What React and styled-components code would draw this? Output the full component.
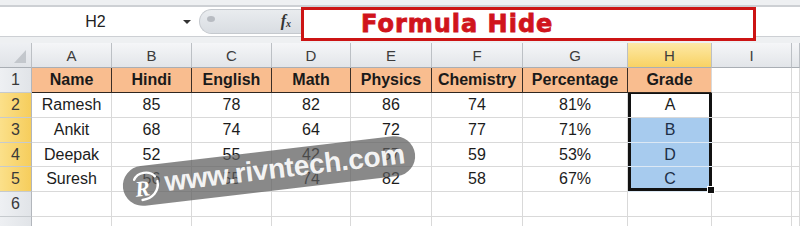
import { Fragment } from "react";
import styled, { createGlobalStyle, css } from "styled-components";

const Global = createGlobalStyle`
  html, body {
    margin: 0;
    padding: 0;
    background: #fff;
  }
  body {
    width: 800px;
    height: 226px;
    overflow: hidden;
    font-family: "Liberation Sans", Arial, sans-serif;
  }
`;

const Page = styled.div`
  width: 800px;
  height: 226px;
  overflow: hidden;
  background: #fff;
`;

const Toolbar = styled.div`
  height: 43px;
  background: #eef0f2;
  padding-top: 5px;
  box-sizing: border-box;
`;

const FormulaRow = styled.div`
  height: 32px;
  box-sizing: border-box;
  border-top: 2px solid #cdd0d4;
  border-bottom: 1px solid #cdd0d4;
  background: #fff;
  display: flex;
  align-items: flex-start;
`;

const NameBox = styled.div`
  width: 197px;
  height: 29px;
  display: flex;
  align-items: center;
  font-size: 16px;
  color: #222;
`;

const NameText = styled.span`
  flex: 1;
  text-align: center;
  padding-left: 8px;
`;

const Arrow = styled.span`
  width: 0;
  height: 0;
  border-left: 4px solid transparent;
  border-right: 4px solid transparent;
  border-top: 4px solid #333;
  margin-right: 6px;
`;

const Splitter = styled.div`
  width: 102px;
  height: 25px;
  margin-top: 2px;
  margin-left: 2px;
  border-radius: 13px 0 0 13px;
  background: linear-gradient(#e9ecef, #d9dde2);
  border: 1px solid #c5c9ce;
  border-right: none;
  box-sizing: border-box;
  display: flex;
  align-items: center;
  justify-content: space-between;
  padding: 0 10px 0 7px;
`;

const Knob = styled.span`
  width: 8px;
  height: 6px;
  border-radius: 50%;
  background: #b8bcc2;
  margin-top: -6px;
`;

const Fx = styled.span`
  font-family: "Liberation Serif", "Times New Roman", serif;
  font-style: italic;
  font-weight: bold;
  font-size: 16px;
  color: #333;
  margin-top: -2px;

  sub {
    font-size: 10px;
    vertical-align: -1px;
  }
`;

const FormulaBox = styled.div`
  width: 455px;
  height: 34px;
  box-sizing: border-box;
  border: 3px solid #cc1414;
  background: #fff;
  padding-left: 57px;
  display: flex;
  align-items: center;
  font-family: "DejaVu Sans", Verdana, sans-serif;
  font-weight: bold;
  font-size: 24px;
  letter-spacing: 1px;
  color: #d0141c;
  -webkit-text-stroke: 0.8px #d0141c;
`;

const SheetWrap = styled.div`
  position: relative;
`;

const Sheet = styled.div`
  display: grid;
  grid-template-columns: 32px 80px 80px 80px 79px 81px 91px 105px 84px 80px 1fr;
  grid-template-rows: 25px 25px 25px 25px 24px 25px 25px 25px;
`;

const Base = css`
  box-sizing: border-box;
  display: flex;
  align-items: center;
  justify-content: center;
  position: relative;
  white-space: nowrap;
`;

const ColHead = styled.div`
  ${Base}
  font-size: 15px;
  color: #3c3c3c;
  border-right: 1px solid #bcc0c5;
  border-bottom: 1px solid #a9aeb4;
  background: ${(p) =>
    p.$active
      ? "linear-gradient(#fde9a6, #f8d264)"
      : "linear-gradient(#f5f6f8, #e2e5e9)"};
`;

const Corner = styled.div`
  ${Base}
  border-right: 1px solid #bcc0c5;
  border-bottom: 1px solid #a9aeb4;
  background: linear-gradient(#eef0f3, #e0e3e7);

  &::after {
    content: "";
    position: absolute;
    right: 5px;
    bottom: 4px;
    width: 0;
    height: 0;
    border-left: 12px solid transparent;
    border-bottom: 13px solid #c3c7cc;
  }
`;

const RowHead = styled.div`
  ${Base}
  font-size: 16px;
  color: #3a3a3a;
  border-right: 1px solid #b2b6bc;
  border-bottom: 1px solid #c6cace;
  background: ${(p) =>
    p.$active
      ? "linear-gradient(90deg, #fbe08a, #f6cd5c)"
      : "linear-gradient(90deg, #eef0f3, #e1e4e8)"};
`;

const Cell = styled.div`
  ${Base}
  font-size: 16px;
  color: #1c1c1c;
  border-right: 1px solid #d9d9d9;
  border-bottom: 1px solid #d9d9d9;
  background: #fff;

  ${(p) =>
    p.$head &&
    css`
      background: #f9bd8f;
      font-weight: bold;
      color: #1a1a1a;
      border-right: 1px solid ${p.$last ? "#d9d9d9" : "#3a2e26"};
      border-bottom: 1px solid #2e2620;
    `}

  ${(p) =>
    p.$blue &&
    css`
      background: #a7cbee;
      color: #1d2f46;
      border-bottom: 1px solid #dce8f4;
    `}

  ${(p) =>
    p.$sel &&
    css`
      border-right: none;
      box-shadow: inset 3px 0 0 #111, inset -3px 0 0 #111
        ${p.$first ? ", inset 0 1px 0 #111" : ""}
        ${p.$end ? ", inset 0 -3px 0 #111" : ""};
    `}
`;

const Handle = styled.span`
  position: absolute;
  right: -3px;
  bottom: -3px;
  width: 6px;
  height: 6px;
  background: #111;
  border: 1px solid #fff;
  z-index: 2;
`;

const Watermark = styled.div`
  position: absolute;
  left: 122px;
  top: 108px;
  width: 294px;
  height: 40px;
  border-radius: 20px;
  background: rgba(92, 92, 92, 0.72);
  transform: rotate(-6.7deg);
  display: flex;
  align-items: center;
  padding-left: 6px;
  box-sizing: border-box;
  pointer-events: none;
  z-index: 3;
`;

const WmText = styled.span`
  font-family: "Liberation Sans", Arial, sans-serif;
  font-weight: bold;
  font-size: 28px;
  color: rgba(255, 255, 255, 0.92);
  letter-spacing: -0.3px;
  margin-left: 4px;
  margin-top: -3px;
`;

const Logo = () => (
  <svg width="32" height="34" viewBox="0 0 32 34">
    <path
      d="M6 10 C10 3, 22 2, 27 9"
      fill="none"
      stroke="#fff"
      strokeWidth="2.4"
      strokeLinecap="round"
    />
    <path
      d="M29 14 C30 24, 22 31, 12 31"
      fill="none"
      stroke="#fff"
      strokeWidth="2.4"
      strokeLinecap="round"
    />
    <text
      x="6"
      y="27"
      fontFamily="Liberation Serif, serif"
      fontStyle="italic"
      fontWeight="bold"
      fontSize="22"
      fill="#fff"
    >
      R
    </text>
  </svg>
);

const cols = ["A", "B", "C", "D", "E", "F", "G", "H", "I", ""];
const headers = ["Name", "Hindi", "English", "Math", "Physics", "Chemistry", "Percentage", "Grade"];
const rows = [
  ["Ramesh", "85", "78", "82", "86", "74", "81%", "A"],
  ["Ankit", "68", "74", "64", "72", "77", "71%", "B"],
  ["Deepak", "52", "55", "42", "57", "59", "53%", "D"],
  ["Suresh", "56", "55", "74", "82", "58", "67%", "C"],
];

const App = () => {
  return (
    <Page>
      <Global />
      <Toolbar>
        <FormulaRow>
          <NameBox>
            <NameText>H2</NameText>
            <Arrow />
          </NameBox>
          <Splitter>
            <Knob />
            <Fx>
              f<sub>x</sub>
            </Fx>
          </Splitter>
          <FormulaBox>Formula Hide</FormulaBox>
        </FormulaRow>
      </Toolbar>
      <SheetWrap>
        <Sheet>
          <Corner />
          {cols.map((c, i) => (
            <ColHead key={"c" + i} $active={c === "H"}>
              {c}
            </ColHead>
          ))}

          <RowHead>1</RowHead>
          {headers.map((h, i) => (
            <Cell key={"h" + i} $head $last={i === headers.length - 1}>
              {h}
            </Cell>
          ))}
          <Cell />
          <Cell />

          {rows.map((r, ri) => (
            <Fragment key={"r" + ri}>
              <RowHead $active>{ri + 2}</RowHead>
              {r.map((v, ci) => {
                const isGrade = ci === 7;
                return (
                  <Cell
                    key={ri + "-" + ci}
                    $sel={isGrade}
                    $blue={isGrade && ri > 0}
                    $first={isGrade && ri === 0}
                    $end={isGrade && ri === rows.length - 1}
                  >
                    {v}
                    {isGrade && ri === rows.length - 1 && <Handle />}
                  </Cell>
                );
              })}
              <Cell />
              <Cell />
            </Fragment>
          ))}

          {["6", ""].map((n, ni) => (
            <Fragment key={"e" + ni}>
              <RowHead>{n}</RowHead>
              {cols.map((c, i) => (
                <Cell key={ni + "-" + i} />
              ))}
            </Fragment>
          ))}
        </Sheet>
        <Watermark>
          <Logo />
          <WmText>www.rivntech.com</WmText>
        </Watermark>
      </SheetWrap>
    </Page>
  );
};

export default App;
